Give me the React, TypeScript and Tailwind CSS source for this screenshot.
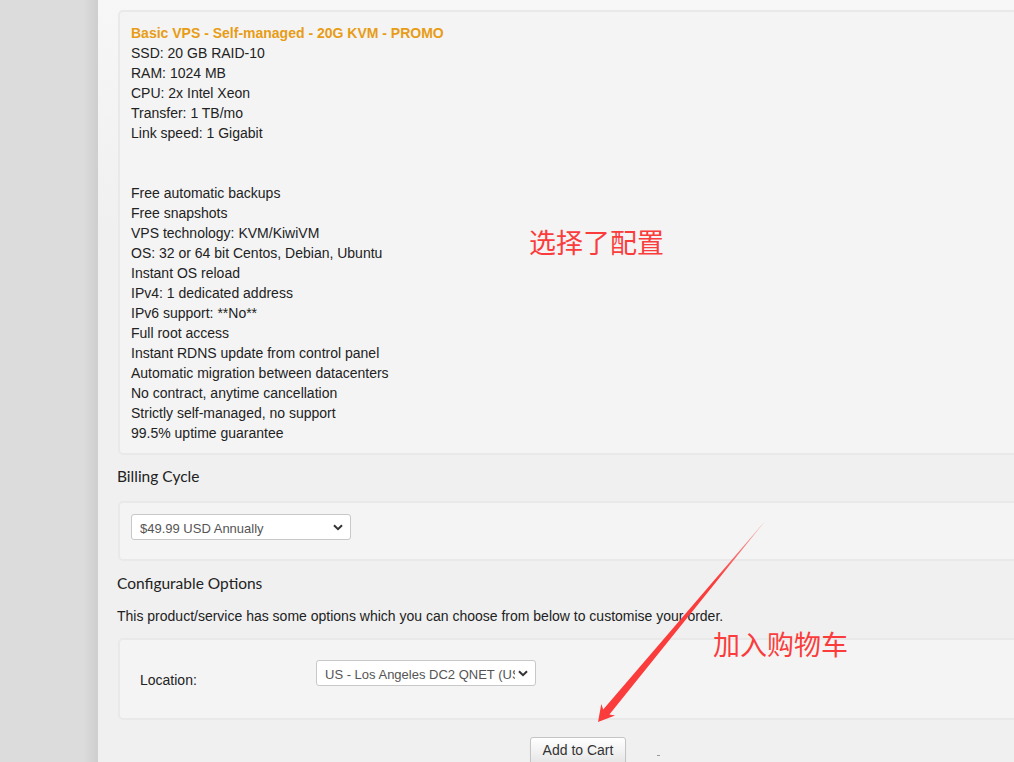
import React from 'react';

const specs = ['SSD: 20 GB RAID-10', 'RAM: 1024 MB', 'CPU: 2x Intel Xeon', 'Transfer: 1 TB/mo', 'Link speed: 1 Gigabit'];

const features = [
  'Free automatic backups',
  'Free snapshots',
  'VPS technology: KVM/KiwiVM',
  'OS: 32 or 64 bit Centos, Debian, Ubuntu',
  'Instant OS reload',
  'IPv4: 1 dedicated address',
  'IPv6 support: **No**',
  'Full root access',
  'Instant RDNS update from control panel',
  'Automatic migration between datacenters',
  'No contract, anytime cancellation',
  'Strictly self-managed, no support',
  '99.5% uptime guarantee',
];

function Dropdown({ value, width }: { value: string; width: string }) {
  return (
    <div className={`relative ${width}`}>
      <select
        defaultValue={value}
        className="appearance-none block w-full h-[26px] bg-white border border-[#c8c8c8] rounded-[3px] pl-[8px] pr-[20px] pt-[3px] text-[13px] text-[#555] font-['Liberation_Sans',Arial,sans-serif] outline-none"
      >
        <option>{value}</option>
      </select>
      <svg className="absolute right-[8px] top-[10px] w-[10px] h-[7px] pointer-events-none" viewBox="0 0 10 7" fill="none">
        <path d="M1 1.2l4 4 4-4" stroke="#333" strokeWidth="2" />
      </svg>
    </div>
  );
}

export default function App() {
  return (
    <div className="relative w-[1014px] h-[762px] overflow-hidden flex font-['Liberation_Sans',Arial,sans-serif] text-[#222]">
      {/* left gutter */}
      <div className="w-[98px] shrink-0 bg-linear-to-r from-[#dcdcdc] from-85% to-[#cecece]" />

      {/* main */}
      <div className="flex-1 bg-linear-to-b from-[#f7f7f7] to-[#f0f0f0] to-30% pl-[20px] pt-[10px]">
        <div className="w-[920px]">
          {/* product details */}
          <div className="bg-[#f4f4f4] border-2 border-[#e9e9e9] rounded-[5px] pl-[11px] pt-[11px] pb-[10px] text-[14px] leading-[20px]">
            <div className="font-bold text-[#e89c16]">Basic VPS - Self-managed - 20G KVM - PROMO</div>
            {specs.map((s) => (
              <div key={s}>{s}</div>
            ))}
            <div className="h-[40px]" />
            {features.map((f) => (
              <div key={f}>{f}</div>
            ))}
          </div>

          {/* billing cycle */}
          <h3 className="mt-[10px] mb-[14px] text-[15.5px] leading-[22px] text-[#222] font-['Lato',sans-serif] -ml-[1px]">Billing Cycle</h3>
          <div className="bg-[#f4f4f4] border-2 border-[#e9e9e9] rounded-[5px] pl-[11px] pt-[11px] pb-[19px]">
            <Dropdown value="$49.99 USD Annually" width="w-[220px]" />
          </div>

          {/* configurable options */}
          <h3 className="mt-[11px] text-[15.5px] leading-[22px] text-[#222] font-['Lato',sans-serif] -ml-[1px]">Configurable Options</h3>
          <p className="mt-[12px] text-[14px] leading-[20px] -ml-[1px]">
            This product/service has some options which you can choose from below to customise your order.
          </p>
          <div className="mt-[12px] bg-[#f4f4f4] border-2 border-[#e9e9e9] rounded-[5px] pl-[20px] pt-[20px] pb-[28px] flex items-start">
            <div className="w-[176px] pt-[10px] text-[14px] leading-[20px]">Location:</div>
            <Dropdown value="US - Los Angeles DC2 QNET (US)" width="w-[220px]" />
          </div>

          {/* add to cart */}
          <div className="mt-[17px] flex justify-center">
            <button className="h-[29px] px-[12px] pt-[2px] flex items-start text-[14px] leading-[20px] text-[#333] bg-linear-to-b from-white to-[#e4e4e4] border border-[#c4c4c4] rounded-[3px] shadow-[0_1px_1px_rgba(0,0,0,0.08)]">
              Add to Cart
            </button>
          </div>
        </div>
      </div>

      {/* annotations */}
      <div className="absolute left-[529px] top-[225px] text-[27px] leading-[34px] text-[#fb3c3c] font-['Noto_Sans_CJK_SC',sans-serif]">
        选择了配置
      </div>
      <div className="absolute left-[713px] top-[627px] text-[27px] leading-[34px] text-[#fb3c3c] font-['Noto_Sans_CJK_SC',sans-serif]">
        加入购物车
      </div>
      <svg className="absolute inset-0 pointer-events-none" width="1014" height="762" viewBox="0 0 1014 762">
        <defs>
          <linearGradient id="arrowFade" gradientUnits="userSpaceOnUse" x1="766" y1="520" x2="598" y2="722">
            <stop offset="0" stopColor="#fb3c3c" stopOpacity="0.35" />
            <stop offset="0.3" stopColor="#fb3c3c" stopOpacity="1" />
            <stop offset="1" stopColor="#fb3c3c" stopOpacity="1" />
          </linearGradient>
        </defs>
        <polygon
          points="766,520 609.4,714.6 615.1,715.5 598,722 601.3,704 603.2,709.4"
          fill="url(#arrowFade)"
        />
      </svg>
      <div className="absolute left-[657px] top-[755px] w-[3px] h-[1px] bg-[#999]" />
    </div>
  );
}
